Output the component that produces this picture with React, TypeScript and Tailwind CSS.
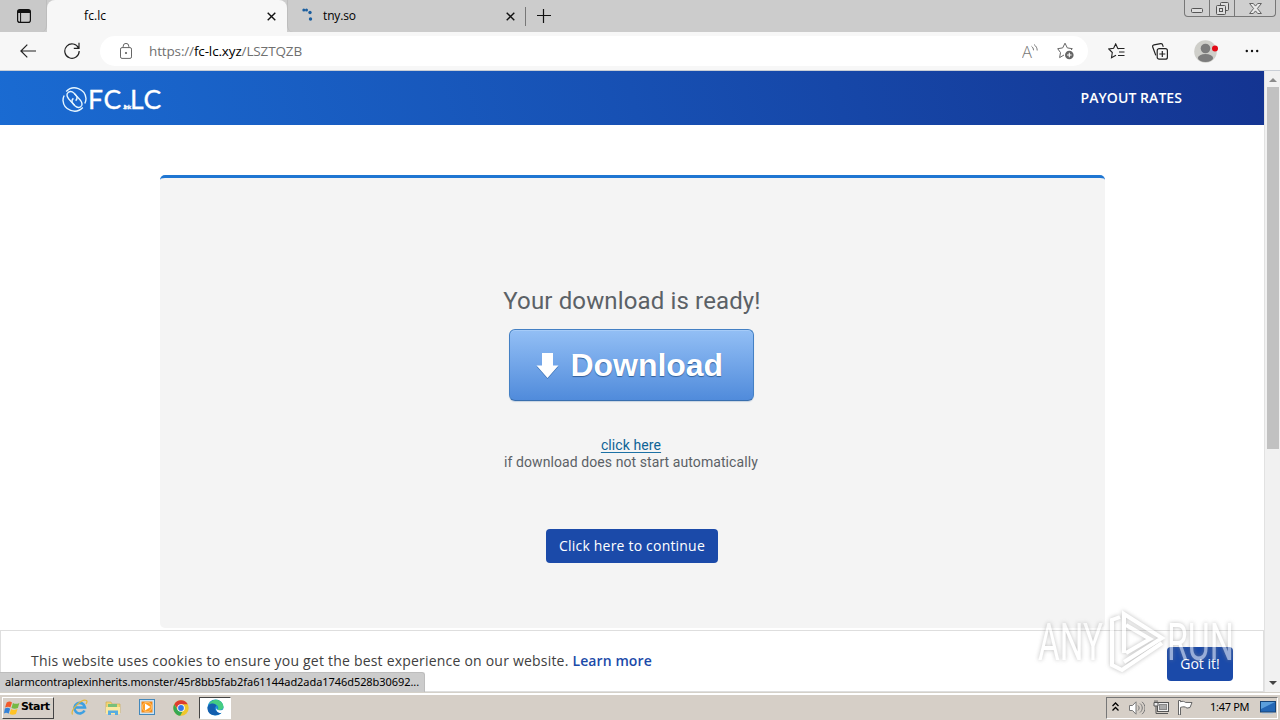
import type { ReactNode } from "react";

function TabClose() {
  return (
    <svg className="h-[9px] w-[9px]" viewBox="0 0 9 9" stroke="#111" strokeWidth="1.4" fill="none">
      <path d="M.7.7l7.6 7.6M8.3.7L.7 8.3" />
    </svg>
  );
}

function TabStrip() {
  return (
    <div className="flex h-8 w-full shrink-0 bg-[#cccccc]">
      {/* Tab actions */}
      <div className="flex w-[47px] items-center justify-center rounded-br-md border-r border-[#bdbdbd] bg-[#c9c9c9] pl-[2px]">
        <svg className="h-[14px] w-[14px]" viewBox="0 0 14 14" fill="none" stroke="#111">
          <rect x=".6" y=".6" width="12.8" height="12.8" rx="2.2" strokeWidth="1.2" />
          <path d="M1 2.5h12" strokeWidth="3" />
          <path d="M3.6 3v10.5" strokeWidth="1" />
        </svg>
      </div>
      <div className="flex w-[240px] items-center justify-between rounded-t-lg bg-[#f7f7f7] pl-[37px] pr-[11px]">
        <span className="text-[12px] leading-4 tracking-[0.1px] text-black">fc.lc</span>
        <TabClose />
      </div>
      <div className="flex w-[238px] items-center rounded-bl-md border-l border-[#bdbdbd] pl-[13px] pr-[10px]">
        <svg className="mb-[3px] h-[14px] w-[14px]" viewBox="0 0 14 14" fill="#1c5f9f">
          <circle cx="2.8" cy="2" r="1.5" />
          <circle cx="5.5" cy="2" r="1.5" />
          <circle cx="9" cy="4.5" r="1.7" />
          <circle cx="9.5" cy="11" r="1.7" />
        </svg>
        <span className="ml-2 flex-1 text-[12px] leading-4 tracking-[-0.15px] text-black">tny.so</span>
        <TabClose />
      </div>
      <div className="mt-[7px] h-[19px] w-px bg-[#777]" />
      <svg className="ml-[11px] mt-[9px] h-[14px] w-[14px]" viewBox="0 0 14 14" stroke="#111" strokeWidth="1.2">
        <path d="M6.5 0v14M0 6.5h14" />
      </svg>
      {/* Window buttons */}
      <div className="ml-auto mr-[4px] flex h-[17px] rounded-b-[4px] border border-t-0 border-[#777] bg-[#cfcfcf]">
        <div className="flex w-[25px] items-center justify-center border-r border-[#777]">
          <svg className="mt-[5px] h-[5px] w-[12px]" viewBox="0 0 12 5">
            <rect x=".5" y=".5" width="11" height="4" rx="1" fill="#ddd" stroke="#555" />
          </svg>
        </div>
        <div className="flex w-[25px] items-center justify-center border-r border-[#777]">
          <svg className="h-[13px] w-[13px]" viewBox="0 0 13 13" fill="#ddd" stroke="#555">
            <rect x="4.5" y=".5" width="8" height="8" rx="1" />
            <rect x=".5" y="3.5" width="9" height="9" rx="1" />
            <rect x="3.5" y="6.5" width="3" height="3" />
          </svg>
        </div>
        <div className="flex w-[40px] items-center justify-center">
          <svg className="h-[11px] w-[13px]" viewBox="0 0 13 11" fill="#eaeaea" stroke="#555" strokeWidth=".9">
            <path d="M.6.5h3.7l2.2 2.6L8.7.5h3.7L8.4 5.5l4 5H8.7L6.5 7.9l-2.2 2.6H.6l4-5z" />
          </svg>
        </div>
      </div>
    </div>
  );
}

function Toolbar() {
  return (
    <div className="flex h-[39px] w-full shrink-0 items-center border-b border-[#c9ced6] bg-[#f7f7f7]">
      <svg className="ml-5 h-[14px] w-4" viewBox="0 0 16 14" fill="none" stroke="#222" strokeWidth="1.2">
        <path d="M16 7H.8M7.3.6L.9 7l6.4 6.4" />
      </svg>
      <svg className="mb-[2px] ml-7 h-[17px] w-4" viewBox="0 0 16 17" fill="none" stroke="#222" strokeWidth="1.2">
        <path d="M14.6 6.2A7.2 7.2 0 1 0 15.2 9M15 .8v5.6H9.8" />
      </svg>
      <div className="ml-5 flex h-[30px] w-[988px] items-center rounded-full bg-white">
        <svg className="ml-5 h-4 w-3" viewBox="0 0 12 16" fill="none" stroke="#666">
          <rect x=".5" y="4.6" width="11" height="10.8" rx="1.5" />
          <path d="M3.2 4.5V3.2a2.8 2.8 0 0 1 5.6 0v1.3" />
          <circle cx="6" cy="10" r=".7" fill="#666" />
        </svg>
        <span className="ml-[17px] flex-1 text-[13.5px] leading-5 tracking-[-0.14px] text-[#707070]">
          https://<span className="text-black">fc-lc.xyz</span>/LSZTQZB
        </span>
        <svg className="mr-[-1px] h-[15px] w-4" viewBox="0 0 16 15" fill="none" stroke="#777">
          <text x="0" y="14" fontSize="16.5" fill="#777" stroke="none" className="font-['Open_Sans',sans-serif] font-light">
            A
          </text>
          <path d="M9.5 2.3c1.300 1 2 2.200 2 4M12 .5c2.200 1.700 3.200 3.600 3.200 6" />
        </svg>
        <svg className="ml-5 mr-[14px] h-[18px] w-[17px]" viewBox="0 0 17 18" fill="none" stroke="#666">
          <path d="M7 13l-4.4 2.6.9-5L.7 6.7l5-.8L8 1.2l2.3 4.7 5 .8-1.2 1.3" />
          <circle cx="12.3" cy="13" r="4.3" fill="#666" stroke="none" />
          <path d="M12.3 10.7v4.6M10 13h4.6" stroke="#fff" strokeWidth="1.1" />
        </svg>
      </div>
      <svg className="ml-5 h-4 w-[17px]" viewBox="0 0 17 16" fill="none" stroke="#222" strokeWidth="1.1">
        <path d="M11 5.6l-1.2-.2L7.7.9 5.6 5.3.8 6l3.5 3.5-.8 5.2L8 12.2M10 5.5h6.5M11 9h5.5M10 12.5h6.5" />
      </svg>
      <svg className="ml-[27px] h-[17px] w-4" viewBox="0 0 16 17" fill="none" stroke="#222" strokeWidth="1.2">
        <rect x="5.2" y="5.7" width="10.2" height="10.5" rx="2" />
        <path d="M3.8 12.4L.8 4.2C.3 2.9.9 2 2 1.8L8.6.7c1.2-.2 1.9.3 2.2 1.7l.5 1.4M10.3 8v6M7.3 11h6" />
      </svg>
      <svg className="ml-[26px] h-[23px] w-6" viewBox="0 0 24 23">
        <circle cx="11.5" cy="11.5" r="11.3" fill="#cfcfca" />
        <circle cx="11.5" cy="8.5" r="4.8" fill="#7c7c7c" />
        <ellipse cx="11.5" cy="18" rx="7.6" ry="4" fill="#7c7c7c" />
        <circle cx="21" cy="8.5" r="3" fill="#e30b17" />
      </svg>
      <svg className="ml-[27px] h-1 w-[14px]" viewBox="0 0 14 4" fill="#111">
        <circle cx="1.8" cy="2" r="1.2" />
        <circle cx="7" cy="2" r="1.2" />
        <circle cx="12.2" cy="2" r="1.2" />
      </svg>
    </div>
  );
}

function SiteHeader() {
  return (
    <header className="flex h-[54px] items-center justify-between bg-[linear-gradient(75deg,#1a6bd2_0%,#1750b3_50%,#143491_100%)] pl-[62px] pr-[82px]">
      <div className="mt-[2px] flex items-center text-white">
        <svg className="h-[25px] w-[25px]" viewBox="0 0 25 25" fill="none" stroke="#e6f6ff" strokeWidth="1.4">
          <path d="M4.2 4.5A11.5 11.5 0 0 1 24 11.5c0 1.8-.4 3.5-1.2 5M20.8 20.5A11.5 11.5 0 0 1 1 13.5c0-1.8.4-3.5 1.2-5" />
          <path d="M12.5 18.2L8.6 14C5.5 10.9 4 9 5.3 6.5c1.4-2.5 4.6-2.5 6.5-.6l2 2.2c1.8 2 1.5 4.2-.2 5.5" />
          <path d="M12.5 6.8l3.9 4.2c3.1 3.1 4.6 5 3.3 7.5-1.4 2.5-4.6 2.5-6.5.6l-2-2.2c-1.8-2-1.5-4.2.2-5.5" />
        </svg>
        <div className="ml-[1px] flex items-baseline font-[Lato,sans-serif] text-[26.5px] leading-[26px] [-webkit-text-stroke:0.3px_white]">
          <span className="w-[35px] tracking-[0.8px]">FC</span>
          <span className="w-[7px] text-[6px] font-bold leading-none tracking-[-0.7px]">.link</span>
          <span className="tracking-[0.8px]">LC</span>
        </div>
      </div>
      <nav className="text-[14px] font-semibold leading-5 tracking-[0.06px] text-white">PAYOUT RATES</nav>
    </header>
  );
}

function DownloadCard() {
  return (
    <main className="mx-auto mt-[50px] flex h-[453px] w-[945px] flex-col items-center rounded-[5px] border-t-[3px] border-[#1f76d2] bg-[#f4f4f4] font-[Roboto,sans-serif] text-[#5b6166]">
      <h1 className="mt-[108px] text-[24px] leading-[30px] tracking-[0.14px]">Your download is ready!</h1>
      <button className="mr-[2px] mt-[13px] flex h-[72px] w-[245px] items-center rounded-[6px] border border-[#4480c4] border-b-[#396fae] bg-linear-to-b from-[#93bff5] to-[#508bdb] pl-[26px] shadow-[inset_0_1px_0_#a5cbf8,0_1px_1px_#c8d4e2]">
        <svg className="mt-[1px] h-[26px] w-[23px]" viewBox="0 0 23 26">
          <path d="M6 1h11v12.5h5.5L11.5 26 .5 13.5H6z" fill="#3e73b5" />
          <path d="M6 0h11v12.5h5.5L11.5 25 .5 12.5H6z" fill="#fff" />
        </svg>
        <span className="mb-[1px] ml-[12px] font-['Liberation_Sans',Arial,sans-serif] text-[32px] font-bold leading-10 tracking-[-0.05px] text-white [text-shadow:0_1px_1px_#315f9a]">
          Download
        </span>
      </button>
      <div className="mr-[2px] mt-[36px] text-center text-[14px] leading-[17px]">
        <a className="tracking-[0.1px] text-[#0e6396] underline decoration-[#1c71a5] decoration-1 underline-offset-2">
          click here
        </a>
        <p className="tracking-[0.08px]">if download does not start automatically</p>
      </div>
      <button className="mt-[58px] h-[34px] w-[172px] rounded-[4px] bg-[#1b4aa9] pb-[2px] font-['Open_Sans',sans-serif] text-[14px] tracking-[0.2px] text-white">
        Click here to continue
      </button>
    </main>
  );
}

function Scrollbar() {
  return (
    <div className="flex w-4 flex-col items-center border-l border-[#e2e2e2] bg-[#f1f1f1]">
      <svg className="mt-[7px] h-1 w-2" viewBox="0 0 8 4" fill="#8b8b8b">
        <path d="M0 4l4-4 4 4z" />
      </svg>
      <div className="mt-[5px] h-[362px] w-[12px] bg-[#c1c1c1]" />
      <svg className="mb-[7px] mt-auto h-1 w-2" viewBox="0 0 8 4" fill="#444">
        <path d="M0 0l4 4 4-4z" />
      </svg>
    </div>
  );
}

function CookieBar() {
  return (
    <div className="absolute bottom-0 left-0 flex h-[62px] w-[1264px] items-start justify-between border border-[#dedede] bg-white pl-[30px] pr-[30px] text-[14px] text-[#404040]">
      <p className="mt-5 leading-5 tracking-[0.207px]">
        This website uses cookies to ensure you get the best experience on our website.{" "}
        <a className="font-semibold tracking-[0.1px] text-[#1b4aa9]">Learn more</a>
      </p>
      <button className="mt-4 h-[34px] w-[66px] rounded-[4px] bg-[#1b4aa9] pb-[2px] text-white">Got it!</button>
    </div>
  );
}

function Watermark() {
  return (
    <svg
      className="absolute bottom-[15px] right-[42px] h-[72px] w-[204px] font-[Roboto,sans-serif] text-[52px] [filter:drop-shadow(0_0_2px_#888)]"
      viewBox="0 0 204 72"
      fill="none"
      stroke="#fff"
      opacity=".55"
      strokeWidth="4"
    >
      <text x="4" y="55" textLength="65" lengthAdjust="spacingAndGlyphs" fill="#fff" stroke="none">
        ANY
      </text>
      {/* Play mark */}
      <path d="M90 48V9l38 24-38 24M92 20l24 14-24 14" />
      <path d="M86 12l-8 3v45l10 5 40-27" />
      <text x="133" y="55" textLength="67" lengthAdjust="spacingAndGlyphs" fill="#fff" stroke="none">
        RUN
      </text>
    </svg>
  );
}

function QuickLaunch({ children }: { children: ReactNode }) {
  return <div className="flex h-5 w-[34px] items-center justify-center">{children}</div>;
}

function Taskbar() {
  return (
    <footer className="flex h-[28px] w-full shrink-0 items-center border-t border-[#d4d0c8] bg-[#d6cfc7] pt-[2px] font-['Noto_Sans',sans-serif] shadow-[inset_0_2px_0_#ffffff]">
      <button className="ml-[2px] flex h-[22px] w-[52px] items-center border border-b-[#444] border-l-white border-r-[#444] border-t-white pl-[1px] font-['DejaVu_Sans',sans-serif] text-[11px] font-bold tracking-[-0.55px] text-black">
        <svg className="mr-[1px] h-[16px] w-[16px]" viewBox="0 0 15 15">
          <path d="M2.5 2.3c2-1.3 3.8-1 5 0L6 7C4.7 6 3 6 1 7z" fill="#f15a2b" />
          <path d="M8.4 2.7c2 1.1 3.8 1 6 0L13 7.5c-2 1-4 1-6 0z" fill="#74b943" />
          <path d="M.8 8c2-1 3.7-.8 5 .1l-1.5 4.7c-1.3-1-3-1-4.3-.2z" fill="#3382d8" />
          <path d="M6.7 8.5c1.8 1.1 3.8 1 6 0l-1.5 4.6c-2 1-4 1-6 0z" fill="#ffc325" />
        </svg>
        Start
      </button>
      <div className="ml-2 flex items-center">
        <QuickLaunch>
          <svg className="h-[17px] w-[17px]" viewBox="0 0 17 17" fill="none">
            <path d="M13.5 11.5A5.3 5.3 0 1 1 14 8.5H4.5" stroke="#3da0e2" strokeWidth="2.6" />
            <path d="M1.5 15.5C-1 11 11-1 15.5 1.5c1 .8.5 2-.5 3.5" stroke="#e2b73b" strokeWidth="1.2" />
          </svg>
        </QuickLaunch>
        <QuickLaunch>
          <svg className="h-4 w-4" viewBox="0 0 16 16">
            <path d="M1 2h5l1 2h8v9H1z" fill="#f2d675" stroke="#c9a746" strokeWidth=".6" />
            <path d="M3 4h9v3H3z" fill="#77bf7c" />
            <path d="M1 7h14v7H1z" fill="#fbe9a1" />
            <path d="M3 15v-4.5h10V15h-3v-2H6v2z" fill="#58ace0" />
          </svg>
        </QuickLaunch>
        <QuickLaunch>
          <svg className="h-[17px] w-[17px]" viewBox="0 0 17 17">
            <rect x=".5" y=".5" width="15" height="15" fill="#cbe2f4" stroke="#4388bb" />
            <rect x="2.5" y="2.5" width="11" height="11" fill="#f68a16" />
            <circle cx="8" cy="8" r="4.8" fill="#ff9d23" stroke="#ffc16d" />
            <path d="M6 4.5l5.5 3.5L6 11.5z" fill="#fff" />
          </svg>
        </QuickLaunch>
        <QuickLaunch>
          <svg className="h-4 w-4" viewBox="0 0 16 16">
            <circle cx="8" cy="8" r="7.7" fill="#efc72c" />
            <path d="M1.3 4.2A7.7 7.7 0 0 1 14.7 4.2H8L5 9.5z" fill="#dd3c30" />
            <path d="M1.3 4.2l3.4 5.7L8 11.5l1.5.3-2.3 3.9A7.7 7.7 0 0 1 1.3 4.2z" fill="#36a852" />
            <circle cx="8" cy="8" r="3.8" fill="#fff" />
            <circle cx="8" cy="8" r="2.9" fill="#3477e8" />
          </svg>
        </QuickLaunch>
      </div>
      <div className="ml-[1px] flex h-[22px] w-[32px] items-center justify-center border border-b-white border-l-[#444] border-r-white border-t-[#444] bg-white">
        <svg className="h-[17px] w-[17px]" viewBox="0 0 17 17">
          <circle cx="8.5" cy="8.5" r="8" fill="#168cd5" />
          <path d="M2 5C5-1 15-1 16.5 7.5c.3 3-3 4.2-6 3.5C13 7 9 3.5 2 5z" fill="#45cd82" />
          <path d="M.5 9C1 4 8 3 9.5 7c-3 1-2 5 2 6 2 .5 3 .2 4-.8C12 18 .5 18 .5 9z" fill="#145fae" />
          <path d="M9.5 7c-1 1.5-.5 3.3 1.5 4 2.3.6 4.3.2 5.8-1v3.3c-4.5 2.2-9.3-.8-7.3-6.3z" fill="#fff" />
        </svg>
      </div>
      {/* System tray */}
      <div className="ml-auto mr-[2px] flex h-[22px] w-[172px] items-center border border-b-white border-l-[#777] border-r-white border-t-[#777] pl-[5px]">
        <svg className="mb-[3px] h-[9px] w-[7px]" viewBox="0 0 7 9" fill="none" stroke="#000" strokeWidth="1.3">
          <path d="M.5 4l3-3 3 3M.5 8.5l3-3 3 3" />
        </svg>
        <svg className="ml-[10px] h-[14px] w-4" viewBox="0 0 16 14" fill="#fff" stroke="#777">
          <path d="M.5 4.5h3L7 .8v12.4L3.5 9.5h-3z" />
          <path d="M9 4.5c1.5 1.5 1.5 3.5 0 5M11 2.5c3 2.5 3 6.5 0 9M13 .8c4 3.5 4 9 0 12.4" fill="none" />
        </svg>
        <svg className="ml-2 h-[15px] w-[17px]" viewBox="0 0 17 15" fill="#eee" stroke="#555">
          <rect x="4.5" y="2.5" width="11" height="9" />
          <rect x="6.5" y="4.5" width="7" height="5" fill="#aaa" stroke="#888" />
          <path d="M6 13.5h9M3 6v7.5h3" fill="none" />
          <path d="M1 2.5h4v3.5H1zM2 .3v2M4 .3v2" />
        </svg>
        <svg className="ml-[7px] h-[15px] w-[16px]" viewBox="0 0 16 15" fill="#fff" stroke="#666">
          <path d="M1.5 15V.5h2v1.3c2-1 4-.3 5 .6l6.5.1-2 5-3 .6c-2-1.7-4-1.5-6.5-.7V15z" />
        </svg>
        <span className="ml-[17px] w-[40px] whitespace-nowrap text-[11px] tracking-[-0.3px] text-black">1:47 PM</span>
        <svg className="ml-[10px] h-[13px] w-4" viewBox="0 0 16 13">
          <rect x=".5" y=".5" width="15" height="10.5" fill="#2467b5" stroke="#154478" />
          <path d="M1 1h14L1 8z" fill="#5b9fdc" />
          <path d="M2 12.5h11" stroke="#b9cadb" />
        </svg>
      </div>
    </footer>
  );
}

export default function App() {
  return (
    <div className="relative flex h-[720px] w-[1280px] flex-col overflow-hidden bg-white font-['Open_Sans',sans-serif]">
      <TabStrip />
      <Toolbar />
      <div className="relative flex h-[621px] shrink-0">
        <div className="w-[1264px]">
          <SiteHeader />
          <DownloadCard />
        </div>
        <Scrollbar />
        <CookieBar />
        {/* Link preview */}
        <div className="absolute bottom-0 left-0 h-5 w-[425px] whitespace-nowrap rounded-tr-[3px] border-r border-t border-[#bdbdbd] bg-[#cccccc] pl-[5px] font-['Noto_Sans',sans-serif] text-[11px] leading-[18px] tracking-[-0.06px] text-black">
          alarmcontraplexinherits.monster/45r8bb5fab2fa61144ad2ada1746d528b30692...
        </div>
        <Watermark />
      </div>
      <Taskbar />
    </div>
  );
}
